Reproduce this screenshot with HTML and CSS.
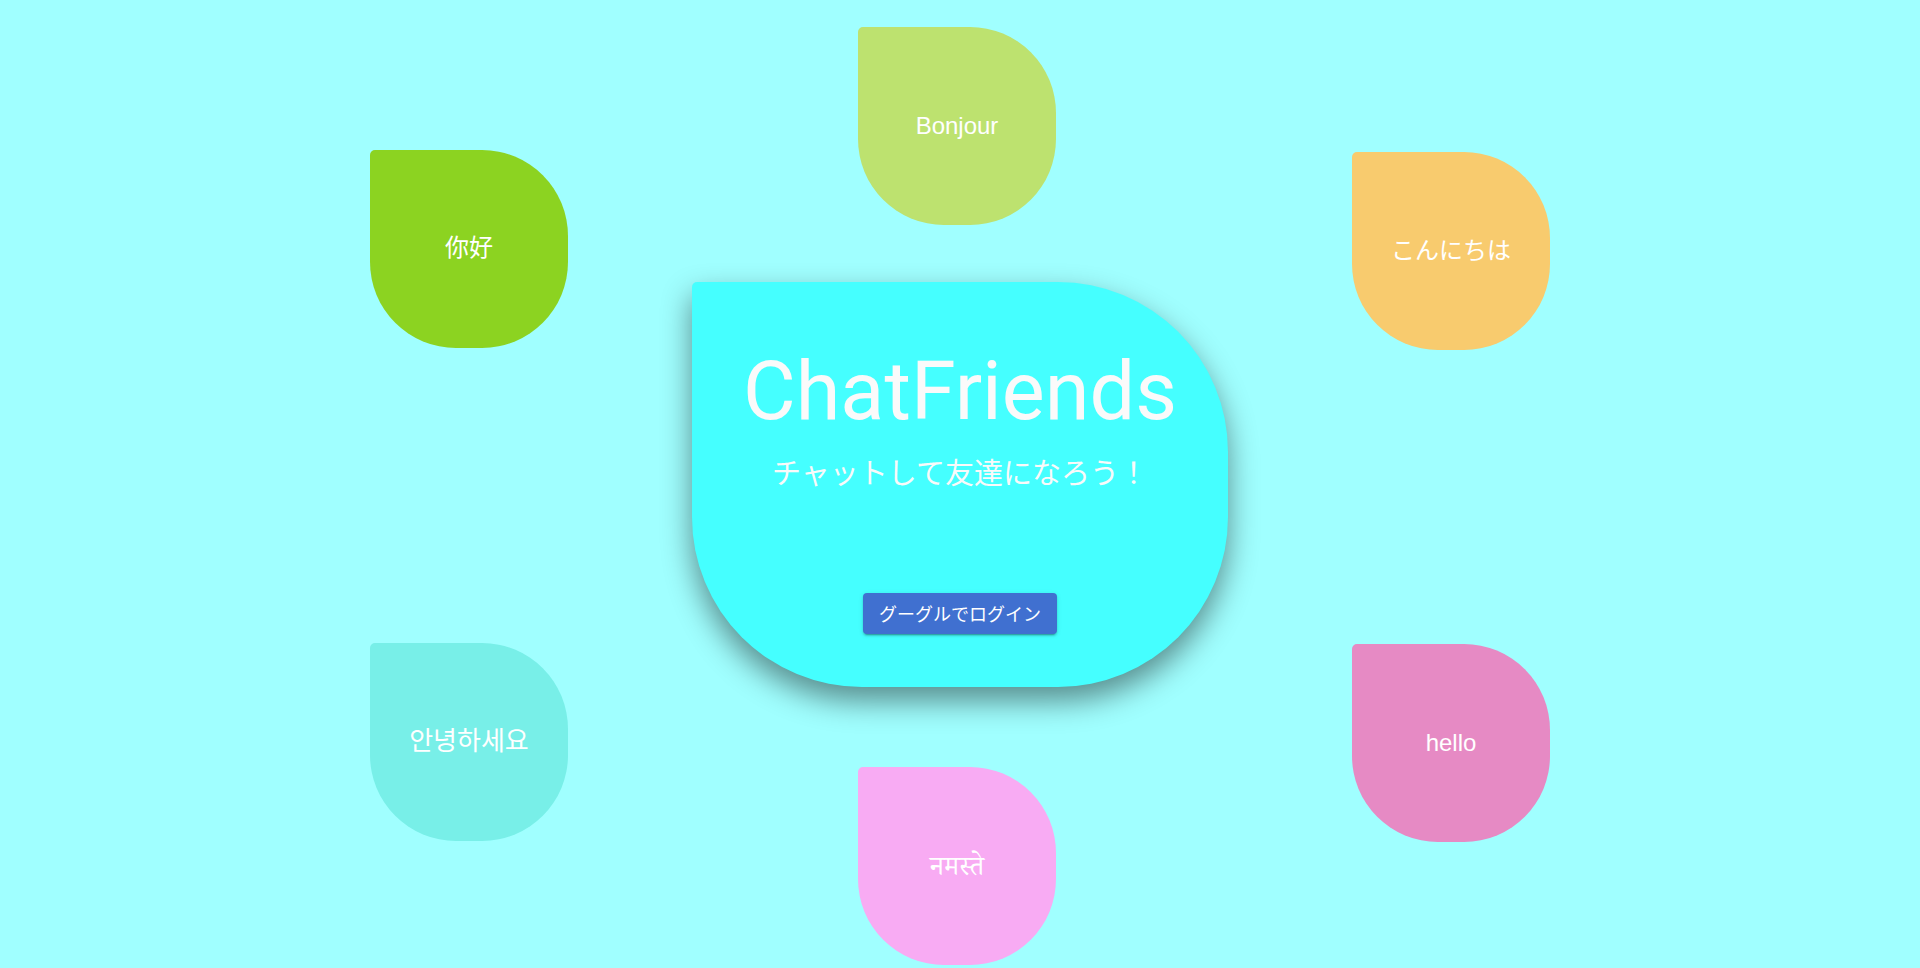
FILE: index.html
```html
<!DOCTYPE html>
<html lang="ja">
<head>
<meta charset="utf-8">
<title>ChatFriends</title>
<link rel="stylesheet" href="styles.css">
</head>
<body>
<main class="stage">
  <div class="blob blob-zh">你好</div>
  <div class="blob blob-fr">Bonjour</div>
  <div class="blob blob-ja">こんにちは</div>
  <div class="blob blob-ko">안녕하세요</div>
  <div class="blob blob-hi">नमस्ते</div>
  <div class="blob blob-en">hello</div>

  <section class="card">
    <h1 class="title">ChatFriends</h1>
    <p class="subtitle">チャットして友達になろう！</p>
    <button class="login" type="button">グーグルでログイン</button>
  </section>
</main>
</body>
</html>
```

FILE: styles.css
```css
html, body {
  margin: 0;
  padding: 0;
}

body {
  background: #a0ffff;
  font-family: "Liberation Sans", "Noto Sans CJK JP", sans-serif;
  color: #fafafa;
}

.stage {
  position: relative;
  width: 100%;
  height: 968px;
  display: flex;
  align-items: center;
  justify-content: center;
  overflow: hidden;
}

.blob {
  position: absolute;
  width: 198px;
  height: 198px;
  box-sizing: border-box;
  border-radius: 5px 86px 86px 86px;
  display: flex;
  align-items: center;
  justify-content: center;
  font-size: 24px;
  color: #ffffff;
}

.blob-zh { left: 370px; top: 150px; background: #8cd321; font-family: "Noto Sans CJK SC", sans-serif; padding-bottom: 7px; }
.blob-fr { left: 858px; top: 27px; background: #bde26f; }
.blob-ja { left: 1352px; top: 152px; background: #f8cb6e; font-family: "Noto Sans CJK JP", sans-serif; padding-bottom: 6px; }
.blob-ko { left: 370px; top: 643px; background: #78efe8; font-family: "Noto Sans CJK KR", sans-serif; font-size: 26px; padding-bottom: 7px; }
.blob-hi { left: 858px; top: 767px; background: #f8abf3; font-family: "Noto Serif Devanagari", "Noto Sans Devanagari", serif; font-size: 27px; padding-top: 10px; }
.blob-en { left: 1352px; top: 644px; background: #e68ac4; }

.card {
  position: relative;
  z-index: 1;
  width: 536px;
  height: 405px;
  box-sizing: border-box;
  padding-top: 70px;
  background: #45ffff;
  border-radius: 5px 170px 170px 170px;
  box-shadow: 0 14px 30px rgba(0, 0, 0, 0.45);
  display: flex;
  flex-direction: column;
  align-items: center;
}

.title {
  margin: 0;
  font-family: Roboto, "Liberation Sans", sans-serif;
  font-weight: 400;
  font-size: 81px;
  line-height: 80px;
  color: #fafafa;
}

.subtitle {
  margin: 25px 0 0;
  font-family: "Noto Sans CJK JP", sans-serif;
  font-weight: 400;
  font-size: 29px;
  line-height: 28px;
  color: #fafafa;
}

.login {
  margin-top: 108px;
  height: 41px;
  padding: 0 16px;
  border: none;
  border-radius: 4px;
  background: #4070d0;
  color: #ffffff;
  font-family: "Noto Sans CJK JP", sans-serif;
  font-size: 18px;
  font-weight: 400;
  box-shadow: 0 3px 1px -2px rgba(0,0,0,0.2), 0 2px 2px 0 rgba(0,0,0,0.14), 0 1px 5px 0 rgba(0,0,0,0.12);
}
```
